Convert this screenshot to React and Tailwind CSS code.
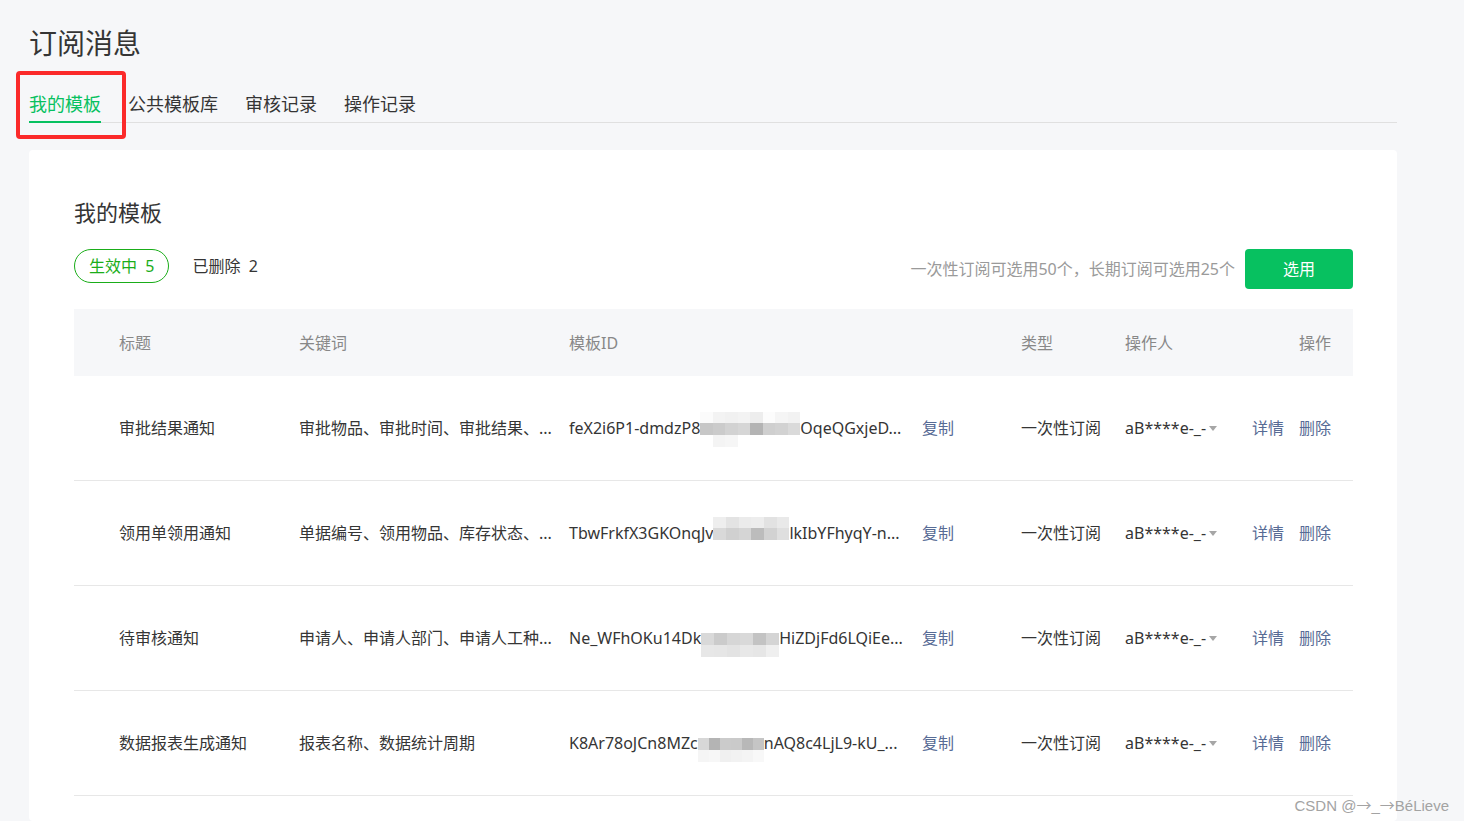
import React from "react";

const FONT = { fontFamily: '"Noto Sans", "Noto Sans CJK SC", sans-serif' };

const rows = [
  {
    title: "审批结果通知",
    kw: "审批物品、审批时间、审批结果、...",
    idA: "feX2i6P1-dmdzP8",
    idB: "OqeQGxjeD...",
    blur: {
      w: 100,
      top: ["#fbfbfb", "#f3f3f3", "#f1f1f1", "#f3f3f3", "#ededed", "#fcfcfc", "#f5f5f5", "#f2f2f2"],
      main: ["#c7c7c7", "#cbcbcb", "#d2d2d2", "#d6d6d6", "#b4b4b4", "#cfcfcf", "#d2d2d2", "#dadada"],
      bot: ["#ffffff", "#f4f4f4", "#f6f6f6", "#ffffff", "#ffffff", "#ffffff", "#ffffff", "#ffffff"],
    },
  },
  {
    title: "领用单领用通知",
    kw: "单据编号、领用物品、库存状态、...",
    idA: "TbwFrkfX3GKOnqJv",
    idB: "lkIbYFhyqY-n...",
    blur: {
      w: 76,
      top: ["#eeeeee", "#e3e3e3", "#ebebeb", "#ededed", "#e2e2e2", "#e9e9e9"],
      main: ["#d9d9d9", "#d0d0d0", "#d5d5d5", "#bcbcbc", "#d2d2d2", "#dfdfdf"],
      bot: ["#ffffff", "#ffffff", "#ffffff", "#ffffff", "#ffffff", "#ffffff"],
    },
  },
  {
    title: "待审核通知",
    kw: "申请人、申请人部门、申请人工种...",
    idA: "Ne_WFhOKu14Dk",
    idB: "HiZDjFd6LQiEe...",
    blur: {
      w: 78,
      top: ["#ffffff", "#ffffff", "#ffffff", "#ffffff", "#ffffff", "#ffffff"],
      main: ["#d9d9d9", "#cbcbcb", "#d6d6d6", "#d9d9d9", "#c3c3c3", "#d4d4d4"],
      bot: ["#e7e7e7", "#e6e6e6", "#e3e3e3", "#e8e8e8", "#e6e6e6", "#efefef"],
    },
  },
  {
    title: "数据报表生成通知",
    kw: "报表名称、数据统计周期",
    idA: "K8Ar78oJCn8MZc",
    idB: "nAQ8c4LjL9-kU_...",
    blur: {
      w: 66,
      top: ["#ffffff", "#ffffff", "#ffffff", "#ffffff", "#ffffff", "#ffffff"],
      main: ["#d7d7d7", "#b4b4b4", "#cbcbcb", "#cacaca", "#b8b8b8", "#c5c5c5"],
      bot: ["#f5f5f5", "#f7f7f7", "#f0f0f0", "#f2f2f2", "#f4f4f4", "#f8f8f8"],
    },
  },
];

function Band({ colors, className }) {
  return (
    <span className={"flex " + className}>
      {colors.map((c, i) => (
        <span key={i} className="flex-1 h-full" style={{ backgroundColor: c }} />
      ))}
    </span>
  );
}

function Blur({ b }) {
  return (
    <span
      className="relative inline-block align-middle h-[12px] -mt-[2px]"
      style={{ width: b.w }}
    >
      <Band colors={b.top} className="absolute left-0 right-0 bottom-full h-[11px]" />
      <Band colors={b.main} className="absolute inset-0" />
      <Band colors={b.bot} className="absolute left-0 right-0 top-full h-[12px]" />
    </span>
  );
}

export default function App() {
  return (
    <div
      className="relative w-[1464px] h-[821px] overflow-hidden bg-[#f6f7f9] text-[#353535]"
      style={FONT}
    >
      <div className="flex flex-col h-full pl-[29px] w-[1397px]">
        <h1 className="pt-[23px] text-[28px] leading-[40px] font-normal text-[#353535]">
          订阅消息
        </h1>

        <div className="mt-[28px] flex gap-[27px] border-b border-[#e0e0e0] text-[18px] leading-[26px]">
          <div className="pb-[4px] border-b-2 border-[#07c160] -mb-px text-[#07c160]">我的模板</div>
          <div className="pb-[5px]">公共模板库</div>
          <div className="pb-[5px]">审核记录</div>
          <div className="pb-[5px]">操作记录</div>
        </div>

        <div className="mt-[27px] flex-1 bg-white rounded-[4px] pt-[46px] pl-[45px] pr-[44px]">
          <h2 className="text-[22px] leading-[32px] font-normal">我的模板</h2>

          <div className="mt-[21px] flex items-start justify-between">
            <div className="flex items-center h-[34px] text-[16px]">
              <div className="h-[34px] px-[14px] flex items-center rounded-full border border-[#1aad19] text-[#1aad19]">
                生效中&nbsp;&nbsp;5
              </div>
              <div className="ml-[23px]">已删除&nbsp;&nbsp;2</div>
            </div>
            <div className="flex items-center gap-[10px]">
              <span className="text-[16px] text-[#9a9a9a]">一次性订阅可选用50个，长期订阅可选用25个</span>
              <button className="w-[108px] h-[40px] rounded-[4px] bg-[#07c160] text-white text-[16px]">
                选用
              </button>
            </div>
          </div>

          <div className="mt-[20px] text-[16px]">
            <div className="flex items-center h-[67px] bg-[#f6f7f9] text-[#888888]">
              <div className="w-[225px] pl-[45px]">标题</div>
              <div className="w-[270px]">关键词</div>
              <div className="w-[452px]">模板ID</div>
              <div className="w-[104px]">类型</div>
              <div className="flex-1">操作人</div>
              <div className="pr-[22px]">操作</div>
            </div>

            {rows.map((r, i) => (
              <div key={i} className="flex items-center h-[105px] border-b border-[#e7e7e7]">
                <div className="w-[225px] pl-[45px] whitespace-nowrap">{r.title}</div>
                <div className="w-[270px] whitespace-nowrap overflow-hidden">{r.kw}</div>
                <div className="w-[452px] flex items-center">
                  <div className="w-[353px] whitespace-nowrap overflow-visible">
                    {r.idA}
                    <Blur b={r.blur} />
                    {r.idB}
                  </div>
                  <span className="text-[#576b95]">复制</span>
                </div>
                <div className="w-[104px] whitespace-nowrap">一次性订阅</div>
                <div className="flex-1 flex items-center whitespace-nowrap">
                  <span>aB****e-_-</span>
                  <svg className="ml-[3px] mt-[1px]" width="8" height="5" viewBox="0 0 8 5">
                    <path d="M0 0 H8 L4 5 Z" fill="#a6a6a6" />
                  </svg>
                </div>
                <div className="pr-[22px] flex gap-[15px] text-[#576b95]">
                  <span>详情</span>
                  <span>删除</span>
                </div>
              </div>
            ))}
          </div>
        </div>
      </div>

      <div className="absolute left-[16px] top-[71px] w-[110px] h-[68px] border-4 border-[#fb2a2a] rounded-[4px]" />

      <div
        className="absolute right-[15px] bottom-[7px] text-[15px] leading-[17px] text-[#a3a3a3] whitespace-nowrap"
        style={{ fontFamily: '"Liberation Sans", Arial, sans-serif' }}
      >
        CSDN @<span style={{ fontFamily: '"Noto Sans CJK SC", sans-serif' }}>→</span>_<span style={{ fontFamily: '"Noto Sans CJK SC", sans-serif' }}>→</span>BéLieve
      </div>
    </div>
  );
}
